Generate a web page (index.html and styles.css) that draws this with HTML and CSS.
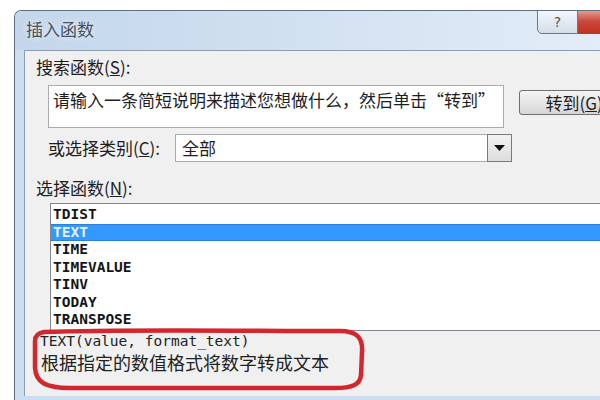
FILE: index.html
```html
<!DOCTYPE html>
<html lang="zh-CN">
<head>
    <meta charset="UTF-8">
    <meta name="viewport" content="width=device-width, initial-scale=1.0">
    <title>插入函数</title>
    <link rel="stylesheet" href="styles.css">
</head>
<body>

    <div class="window">
        <!-- title bar -->
        <div class="titlebar">
            <span class="title">插入函数</span>
            <span class="help">?</span>
            <span class="close"></span>
        </div>

        <div class="content">
            <div class="label">搜索函数(<u>S</u>):</div>
            <div class="search-row">
                <div class="search-box">请输入一条简短说明来描述您想做什么，然后单击“转到”</div>
                <div class="go-btn">转到(<u>G</u>)</div>
            </div>

            <div class="category-row">
                <span class="cat-label">或选择类别(<u>C</u>):</span>
                <div class="select">
                    <span class="select-field">全部</span>
                    <span class="drop">
                        <svg width="11" height="6" viewBox="0 0 11 6"><path d="M0 0 H11 L5.5 6 Z" fill="#111"/></svg>
                    </span>
                </div>
            </div>

            <div class="label list-label">选择函数(<u>N</u>):</div>
            <ul class="func-list">
                <li>TDIST</li>
                <li class="selected">TEXT</li>
                <li>TIME</li>
                <li>TIMEVALUE</li>
                <li>TINV</li>
                <li>TODAY</li>
                <li>TRANSPOSE</li>
            </ul>

            <div class="syntax">TEXT(value, format_text)</div>
            <div class="desc">根据指定的数值格式将数字转成文本</div>
        </div>
    </div>

    <!-- hand drawn red mark over the description -->
    <svg class="mark" width="600" height="400" viewBox="0 0 600 400">
        <path d="M44 332 C120 329 250 331 340 331 C357 331 363 338 362 352 L361 375 C360 385 352 388 335 388 L70 388 C45 388 36 382 35 368 L35 341 C35 336 38 333 44 332 Z"
              fill="none" stroke="#d3262e" stroke-width="4.5" stroke-linejoin="round"/>
    </svg>

</body>
</html>
```

FILE: styles.css
```css
body {
    margin: 0;
    width: 600px;
    height: 400px;
    overflow: hidden;
    background: #fff;
    font-family: "Noto Sans CJK SC", sans-serif;
    color: #1e1e1e;
}
.window {
    margin: 10px 0 0 14px;
    width: 620px;
    height: 390px;
    border-left: 1px solid #5f6f82;
    border-top: 1px solid #5f6f82;
    border-radius: 7px 0 0 0;
    background: #cddef0;
    overflow: hidden;
}
.titlebar {
    display: flex;
    align-items: flex-start;
    height: 39px;
    background: linear-gradient(to right, #c3d6eb, #d5e3f2 55%, #e4eef9);
}
.title {
    flex: 1;
    padding: 7px 0 0 11px;
    font-size: 17px;
    line-height: 22px;
    color: #46525e;
    text-shadow: 0 0 6px #f4f8fc;
}
.help {
    width: 39px;
    height: 22px;
    margin-top: -1px;
    border: 1px solid #6a7a8d;
    border-radius: 0 0 0 5px;
    background: linear-gradient(#f4f7fb, #e2eaf3 50%, #d3dde9);
    text-align: center;
    font-family: "DejaVu Sans", sans-serif;
    font-size: 14px;
    line-height: 22px;
    color: #555;
}
.close {
    width: 57px;
    height: 23px;
    margin-top: -1px;
    border-top: 1px solid #6a3a36;
    background: linear-gradient(#e49a8f, #c9483b 45%, #c0311f);
}
.content {
    margin-left: 9px;
    height: 345px;
    border-top: 1px solid #8d9cae;
    border-left: 1px solid #8d9cae;
    background: #f0f0f0;
    font-size: 17px;
}
.label {
    margin-top: 5px;
    padding-left: 11px;
    line-height: 22px;
}
.search-row {
    display: flex;
    align-items: flex-start;
    margin-top: 7px;
    padding-left: 23px;
}
.search-box {
    width: 454px;
    height: 35px;
    padding: 3px 4px;
    border: 1px solid #a9abb0;
    background: #fff;
    line-height: 22px;
    white-space: nowrap;
}
.go-btn {
    margin: 5px 0 0 15px;
    width: 90px;
    height: 23px;
    padding-left: 25px;
    border: 1px solid #707070;
    border-radius: 3px;
    background: linear-gradient(#f4f4f4, #e6e6e6 50%, #d5d5d5);
    line-height: 23px;
    white-space: nowrap;
}
.category-row {
    display: flex;
    align-items: center;
    margin-top: 6px;
    padding-left: 23px;
}
.cat-label {
    width: 127px;
    line-height: 22px;
}
.select {
    display: flex;
    height: 28px;
}
.select-field {
    width: 305px;
    padding-left: 6px;
    border: 1px solid #a9abb0;
    border-right: none;
    background: #fff;
    line-height: 26px;
}
.drop {
    width: 23px;
    display: flex;
    align-items: center;
    justify-content: center;
    border: 1px solid #7a7a7a;
    background: linear-gradient(#f2f2f2, #dedede);
}
.list-label {
    margin-top: 15px;
}
.func-list {
    list-style: none;
    margin: 4px 0 0 25px;
    padding: 2px 0 1px;
    border: 1px solid #828790;
    background: #fff;
    font-family: "DejaVu Sans Mono", monospace;
    font-weight: bold;
    font-size: 14.5px;
    color: #151515;
}
.func-list li {
    height: 17.5px;
    line-height: 17.5px;
    padding-left: 2px;
}
.func-list .selected {
    background: #3399ff;
    box-shadow: inset 0 1px #2a80d8, inset 0 -1px #2a80d8;
    color: #e6f3ff;
}
.syntax {
    margin: 2px 0 0 15px;
    font-family: "DejaVu Sans Mono", monospace;
    font-size: 14.5px;
    line-height: 17px;
    color: #222;
}
.desc {
    margin-left: 16px;
    font-size: 18px;
    line-height: 24px;
    color: #222;
}
.mark {
    position: absolute;
    left: 0;
    top: 0;
    pointer-events: none;
}
```
